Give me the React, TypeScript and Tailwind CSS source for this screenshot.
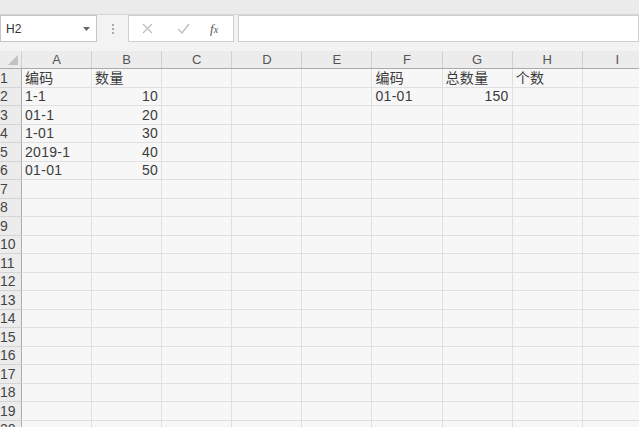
import React from "react";

const cols = ["A", "B", "C", "D", "E", "F", "G", "H", "I"];

// cell values by row (1-based) and column letter; right means numeric alignment
const data: Record<number, Record<string, { v: string; right?: boolean }>> = {
  1: { A: { v: "编码" }, B: { v: "数量" }, F: { v: "编码" }, G: { v: "总数量" }, H: { v: "个数" } },
  2: { A: { v: "1-1" }, B: { v: "10", right: true }, F: { v: "01-01" }, G: { v: "150", right: true } },
  3: { A: { v: "01-1" }, B: { v: "20", right: true } },
  4: { A: { v: "1-01" }, B: { v: "30", right: true } },
  5: { A: { v: "2019-1" }, B: { v: "40", right: true } },
  6: { A: { v: "01-01" }, B: { v: "50", right: true } },
};

const rows = Array.from({ length: 20 }, (_, i) => i + 1);

function FormulaBar() {
  return (
    <div className="flex h-[36px] items-start bg-[#f3f3f3]">
      <div className="relative flex h-[27px] w-[97px] items-center border border-[#c6c6c6] bg-white pl-[5px] text-[12px] text-[#333]">
        H2
        <svg className="absolute right-[6px] top-[11px]" width="7" height="4" viewBox="0 0 7 4">
          <path d="M0 0h7L3.5 4z" fill="#666" />
        </svg>
      </div>
      <div className="flex h-[27px] w-[31px] flex-col items-center justify-center gap-[2px]">
        <span className="h-[2px] w-[2px] bg-[#aaa]" />
        <span className="h-[2px] w-[2px] bg-[#aaa]" />
        <span className="h-[2px] w-[2px] bg-[#aaa]" />
      </div>
      <div className="flex h-[27px] w-[106px] items-center border border-[#d0d0d0] bg-white">
        <svg className="ml-[13px]" width="11" height="11" viewBox="0 0 11 11">
          <path d="M1 1l9 9M10 1l-9 9" stroke="#bdbdbd" strokeWidth="1.2" />
        </svg>
        <svg className="ml-[24px]" width="13" height="11" viewBox="0 0 13 11">
          <path d="M1 6l4 4 7-9" stroke="#bdbdbd" strokeWidth="1.4" fill="none" />
        </svg>
        <span
          className="ml-[20px] text-[13px] italic text-[#555]"
          style={{ fontFamily: '"Liberation Serif", serif' }}
        >
          f<span className="text-[10px]">x</span>
        </span>
      </div>
      <div className="ml-[4px] h-[27px] flex-1 border border-[#d0d0d0] bg-white" />
    </div>
  );
}

function HeaderRow() {
  return (
    <div className="flex h-[18px] border-b border-[#ababab] bg-[#ececec]">
      <div className="relative w-[22px] shrink-0 border-r border-[#d0d0d0]">
        <svg className="absolute bottom-[3px] right-[3px]" width="10" height="10" viewBox="0 0 10 10">
          <path d="M10 0v10H0z" fill="#c2c2c2" />
        </svg>
      </div>
      {cols.map((c) => (
        <div
          key={c}
          className="flex w-[70.1px] shrink-0 items-center justify-center border-r border-[#d0d0d0] text-[13px] leading-none text-[#555]"
        >
          {c}
        </div>
      ))}
    </div>
  );
}

export default function App() {
  return (
    <div
      className="h-[427px] w-[639px] overflow-hidden bg-[#f7f7f7]"
      style={{ fontFamily: '"Liberation Sans", "Noto Sans CJK SC", sans-serif' }}
    >
      <div className="h-[15px] border-b border-[#d6d6d6] bg-[#ebebeb]" />
      <FormulaBar />
      <HeaderRow />
      {rows.map((r) => (
        <div key={r} className="flex h-[18.5px]">
          <div className="flex w-[22px] shrink-0 items-center border-b border-r border-[#d4d4d4] border-r-[#ababab] bg-[#ececec] text-[14px] leading-none text-[#444]">
            {r}
          </div>
          {cols.map((c) => {
            const cell = data[r]?.[c];
            return (
              <div
                key={c}
                className={
                  "flex w-[70.1px] shrink-0 items-center overflow-hidden whitespace-nowrap border-b border-r border-[#e0e0e0] px-[3px] text-[14px] leading-none tracking-[0.3px] text-[#3c3c3c] " +
                  (cell?.right ? "justify-end" : "justify-start")
                }
              >
                {cell?.v}
              </div>
            );
          })}
        </div>
      ))}
    </div>
  );
}
